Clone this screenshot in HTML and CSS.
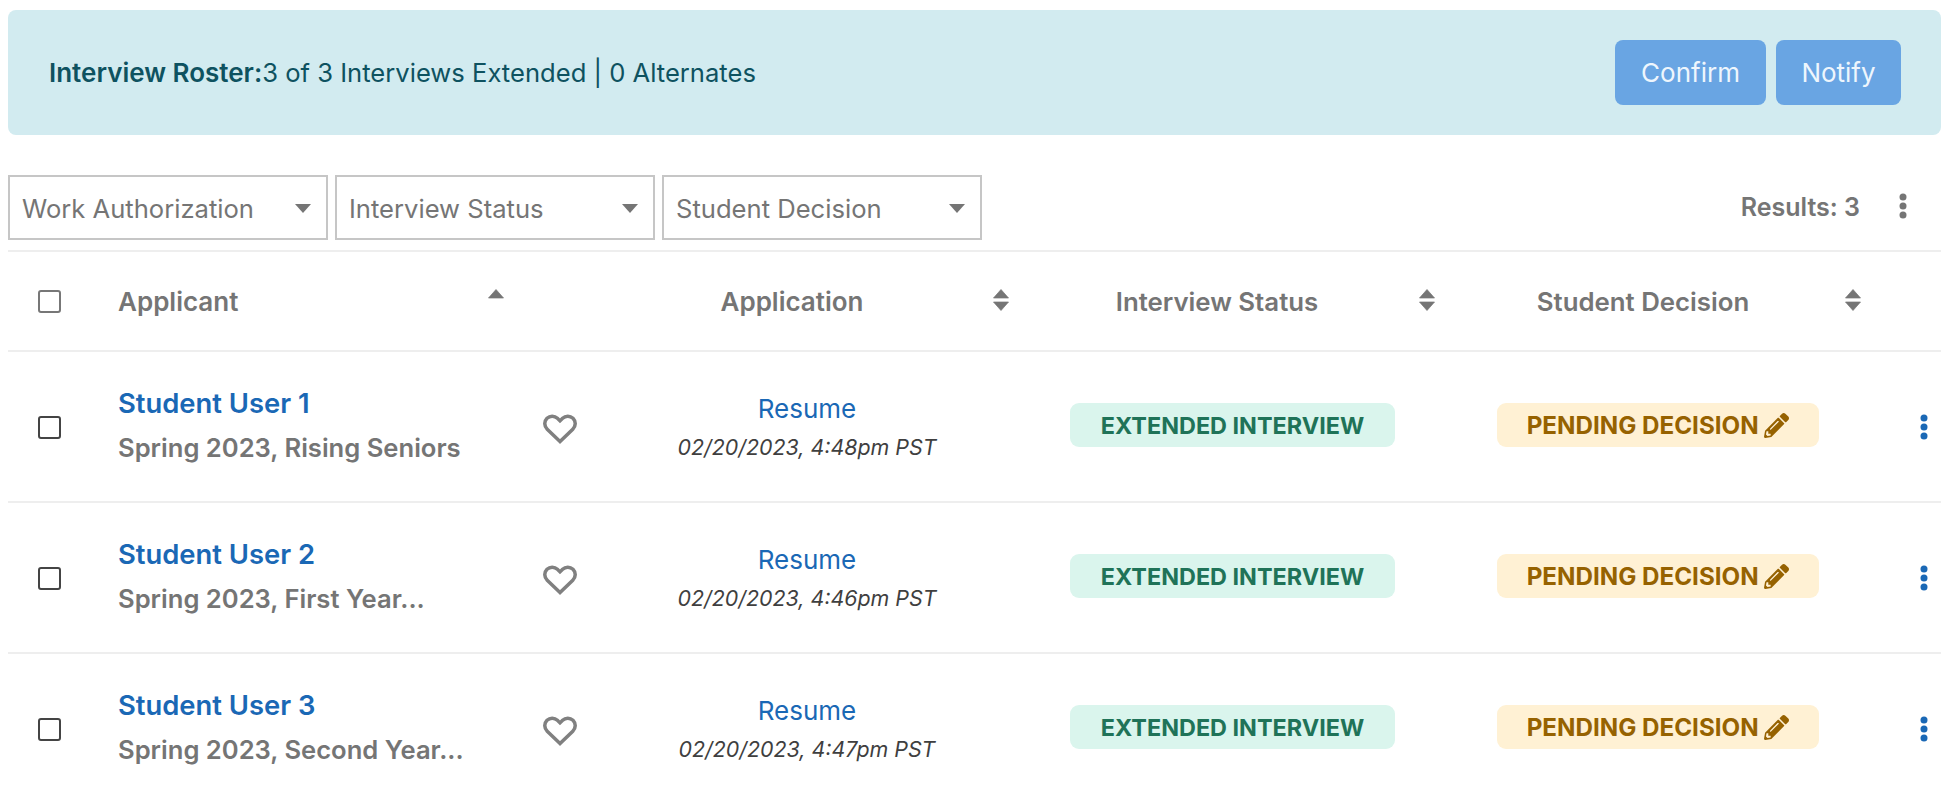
FILE: index.html
```html
<!DOCTYPE html>
<html lang="en">
<head>
<meta charset="utf-8">
<title>Interview Roster</title>
<link rel="stylesheet" href="styles.css">
</head>
<body>
<main class="page">
  <section class="banner">
    <p class="banner-text"><strong>Interview Roster:</strong>3 of 3 Interviews Extended | 0 Alternates</p>
    <div class="banner-actions">
      <button class="btn btn-confirm">Confirm</button>
      <button class="btn btn-notify">Notify</button>
    </div>
  </section>

  <section class="toolbar">
    <div class="filters">
      <div class="filter"><span>Work Authorization</span><i class="caret"></i></div>
      <div class="filter"><span>Interview Status</span><i class="caret"></i></div>
      <div class="filter"><span>Student Decision</span><i class="caret"></i></div>
    </div>
    <div class="results">
      <span>Results: 3</span>
      <svg class="kebab kebab-gray" viewBox="0 0 8 26"><circle cx="4" cy="4" r="3.5"/><circle cx="4" cy="13" r="3.5"/><circle cx="4" cy="22" r="3.5"/></svg>
    </div>
  </section>

  <section class="table">
    <div class="row head">
      <div class="cell-check"><input class="check check-head" type="checkbox" aria-label="Select all"></div>
      <div class="h-cell h-applicant"><span>Applicant</span><svg class="sort" viewBox="0 0 16 22"><path d="M8 0.5 15.5 9H0.5Z"/></svg></div>
      <div class="h-cell h-application"><span>Application</span><svg class="sort" viewBox="0 0 16 22"><path d="M8 0.5 15.5 9H0.5Z"/><path d="M8 21.5 15.5 13H0.5Z"/></svg></div>
      <div class="h-cell h-status"><span>Interview Status</span><svg class="sort" viewBox="0 0 16 22"><path d="M8 0.5 15.5 9H0.5Z"/><path d="M8 21.5 15.5 13H0.5Z"/></svg></div>
      <div class="h-cell h-decision"><span>Student Decision</span><svg class="sort" viewBox="0 0 16 22"><path d="M8 0.5 15.5 9H0.5Z"/><path d="M8 21.5 15.5 13H0.5Z"/></svg></div>
      <div></div>
    </div>

    <div class="row">
      <div class="cell-check"><input class="check" type="checkbox" aria-label="Select Student User 1"></div>
      <div class="applicant">
        <div class="who"><a class="name">Student User 1</a><div class="cohort">Spring 2023, Rising Seniors</div></div>
        <svg class="heart" viewBox="0 0 34 30"><path d="M17 27.5 4.2 15.2C1 12 1 7.2 4 4.2 7 1.4 11.5 1.5 14.4 4.3L17 6.9l2.6-2.6C22.5 1.5 27 1.4 30 4.2c3 3 3 7.8-.2 11Z"/></svg>
      </div>
      <div class="application"><a class="resume">Resume</a><div class="date">02/20/2023, 4:48pm PST</div></div>
      <div class="status"><span class="badge badge-green">EXTENDED INTERVIEW</span></div>
      <div class="decision"><span class="badge badge-yellow">PENDING DECISION <svg class="pencil" viewBox="0 0 512 512"><path d="M497.9 142.1l-46.1 46.1c-4.7 4.7-12.3 4.7-17 0l-111-111c-4.7-4.7-4.7-12.3 0-17l46.1-46.1c18.7-18.7 49.1-18.7 67.9 0l60.1 60.1c18.8 18.7 18.8 49.1 0 67.9zM284.2 99.8L21.6 362.4.4 483.9c-2.9 16.4 11.4 30.6 27.8 27.8l121.5-21.3 262.6-262.6c4.7-4.7 4.7-12.3 0-17l-111-111c-4.8-4.7-12.4-4.7-17.1 0zM124.1 339.9c-5.5-5.5-5.5-14.3 0-19.8l154-154c5.5-5.5 14.3-5.5 19.8 0s5.5 14.3 0 19.8l-154 154c-5.5 5.5-14.3 5.5-19.8 0zM88 424h48v36.3l-64.5 11.3-31.1-31.1L51.7 376H88v48z"/></svg></span></div>
      <div class="actions"><svg class="kebab kebab-blue" viewBox="0 0 8 26"><circle cx="4" cy="4" r="3.5"/><circle cx="4" cy="13" r="3.5"/><circle cx="4" cy="22" r="3.5"/></svg></div>
    </div>

    <div class="row">
      <div class="cell-check"><input class="check" type="checkbox" aria-label="Select Student User 2"></div>
      <div class="applicant">
        <div class="who"><a class="name">Student User 2</a><div class="cohort">Spring 2023, First Year...</div></div>
        <svg class="heart" viewBox="0 0 34 30"><path d="M17 27.5 4.2 15.2C1 12 1 7.2 4 4.2 7 1.4 11.5 1.5 14.4 4.3L17 6.9l2.6-2.6C22.5 1.5 27 1.4 30 4.2c3 3 3 7.8-.2 11Z"/></svg>
      </div>
      <div class="application"><a class="resume">Resume</a><div class="date">02/20/2023, 4:46pm PST</div></div>
      <div class="status"><span class="badge badge-green">EXTENDED INTERVIEW</span></div>
      <div class="decision"><span class="badge badge-yellow">PENDING DECISION <svg class="pencil" viewBox="0 0 512 512"><path d="M497.9 142.1l-46.1 46.1c-4.7 4.7-12.3 4.7-17 0l-111-111c-4.7-4.7-4.7-12.3 0-17l46.1-46.1c18.7-18.7 49.1-18.7 67.9 0l60.1 60.1c18.8 18.7 18.8 49.1 0 67.9zM284.2 99.8L21.6 362.4.4 483.9c-2.9 16.4 11.4 30.6 27.8 27.8l121.5-21.3 262.6-262.6c4.7-4.7 4.7-12.3 0-17l-111-111c-4.8-4.7-12.4-4.7-17.1 0zM124.1 339.9c-5.5-5.5-5.5-14.3 0-19.8l154-154c5.5-5.5 14.3-5.5 19.8 0s5.5 14.3 0 19.8l-154 154c-5.5 5.5-14.3 5.5-19.8 0zM88 424h48v36.3l-64.5 11.3-31.1-31.1L51.7 376H88v48z"/></svg></span></div>
      <div class="actions"><svg class="kebab kebab-blue" viewBox="0 0 8 26"><circle cx="4" cy="4" r="3.5"/><circle cx="4" cy="13" r="3.5"/><circle cx="4" cy="22" r="3.5"/></svg></div>
    </div>

    <div class="row">
      <div class="cell-check"><input class="check" type="checkbox" aria-label="Select Student User 3"></div>
      <div class="applicant">
        <div class="who"><a class="name">Student User 3</a><div class="cohort">Spring 2023, Second Year...</div></div>
        <svg class="heart" viewBox="0 0 34 30"><path d="M17 27.5 4.2 15.2C1 12 1 7.2 4 4.2 7 1.4 11.5 1.5 14.4 4.3L17 6.9l2.6-2.6C22.5 1.5 27 1.4 30 4.2c3 3 3 7.8-.2 11Z"/></svg>
      </div>
      <div class="application"><a class="resume">Resume</a><div class="date">02/20/2023, 4:47pm PST</div></div>
      <div class="status"><span class="badge badge-green">EXTENDED INTERVIEW</span></div>
      <div class="decision"><span class="badge badge-yellow">PENDING DECISION <svg class="pencil" viewBox="0 0 512 512"><path d="M497.9 142.1l-46.1 46.1c-4.7 4.7-12.3 4.7-17 0l-111-111c-4.7-4.7-4.7-12.3 0-17l46.1-46.1c18.7-18.7 49.1-18.7 67.9 0l60.1 60.1c18.8 18.7 18.8 49.1 0 67.9zM284.2 99.8L21.6 362.4.4 483.9c-2.9 16.4 11.4 30.6 27.8 27.8l121.5-21.3 262.6-262.6c4.7-4.7 4.7-12.3 0-17l-111-111c-4.8-4.7-12.4-4.7-17.1 0zM124.1 339.9c-5.5-5.5-5.5-14.3 0-19.8l154-154c5.5-5.5 14.3-5.5 19.8 0s5.5 14.3 0 19.8l-154 154c-5.5 5.5-14.3 5.5-19.8 0zM88 424h48v36.3l-64.5 11.3-31.1-31.1L51.7 376H88v48z"/></svg></span></div>
      <div class="actions"><svg class="kebab kebab-blue" viewBox="0 0 8 26"><circle cx="4" cy="4" r="3.5"/><circle cx="4" cy="13" r="3.5"/><circle cx="4" cy="22" r="3.5"/></svg></div>
    </div>
  </section>
</main>
</body>
</html>
```
FILE: styles.css
```css
* { box-sizing: border-box; }
html, body { margin: 0; height: 800px; overflow: hidden; background: #fff; }
body { font-family: Inter, "Noto Sans", sans-serif; color: #757575; }
.page { padding: 10px 9px 0 8px; }

.banner { height: 125px; background: #d2ebf0; border-radius: 8px; display: flex; align-items: center; justify-content: space-between; padding: 0 40px 0 41px; margin-bottom: 40px; }
.banner-text { margin: 0; font-size: 25.6px; color: #0e5260; }
.banner-text strong { font-weight: 600; font-size: 26px; }
.banner-actions { display: flex; gap: 10px; }
.btn { height: 65px; border: 0; border-radius: 8px; background: #69a5e3; color: #eef6fd; font: 400 26px Inter, sans-serif; }
.btn-confirm { width: 151px; }
.btn-notify { width: 125px; }

.toolbar { display: flex; justify-content: space-between; align-items: center; box-sizing: content-box; height: 65px; padding-bottom: 10px; border-bottom: 2px solid #eee; }
.filters { display: flex; gap: 7px; }
.filter { width: 320px; height: 65px; border: 2px solid #c6c6c6; display: flex; align-items: center; justify-content: space-between; padding: 2px 15px 0 12px; font-size: 25.6px; }
.caret { width: 0; height: 0; border-left: 8px solid transparent; border-right: 8px solid transparent; border-top: 9px solid #757575; }
.results { display: flex; align-items: center; gap: 39px; padding-right: 34px; font-size: 25px; font-weight: 600; margin-top: -4px; }
.results span { margin-top: 2px; }
.kebab { width: 8px; height: 26px; display: block; }
.kebab-gray { fill: #757575; }
.kebab-blue { fill: #1a68b5; }

.row { display: grid; grid-template-columns: 92px 498px 418px 433px 418px 74px; align-items: center; height: 151px; border-bottom: 2px solid #eee; }
.row.head { height: 100px; }
.cell-check { display: flex; padding-left: 30px; margin-top: 1px; }
.check { appearance: none; width: 23px; height: 23px; margin: 0; border: 2px solid #444; border-radius: 3px; background: #fff; }
.check-head { border-color: #777; }

.h-cell { display: grid; align-items: center; font-size: 26px; font-weight: 600; }
.h-cell span { text-align: center; }
.sort { width: 16px; height: 22px; fill: #757575; stroke: #757575; stroke-width: 0.7; stroke-linejoin: round; margin-top: -2px; }
.h-applicant { grid-template-columns: 370px 1fr; padding-left: 18px; }
.h-applicant span { text-align: left; }
.h-application { grid-template-columns: 388px 1fr; }
.h-application .sort { margin-left: 7px; }
.h-status { grid-template-columns: 402px 1fr; font-size: 25.8px; }
.h-status .sort { margin-left: 1px; }
.h-decision { grid-template-columns: 388px 1fr; font-size: 25.8px; }
.h-decision .sort { margin-left: 8px; }

.applicant { display: flex; align-items: center; justify-content: space-between; padding: 0 21px 0 18px; }
.name { display: block; font-size: 27.4px; font-weight: 600; color: #1a68b5; line-height: 32px; margin-bottom: 13px; margin-top: -2px; }
.cohort { font-size: 25.6px; font-weight: 600; line-height: 32px; }
.heart { width: 34px; height: 30px; margin-top: 5px; fill: none; stroke: #808080; stroke-width: 3.5; }

.application { text-align: center; }
.resume { display: block; font-size: 26px; color: #1a68b5; line-height: 30px; margin-top: 1px; margin-bottom: 9px; }
.date { font-size: 21.4px; font-style: italic; color: #3f3f3f; line-height: 28px; }

.status, .decision { display: flex; justify-content: center; margin-top: -3px; }
.badge { height: 44px; border-radius: 9px; display: flex; align-items: center; justify-content: center; font-weight: 700; white-space: pre; }
.badge-green { width: 325px; background: #daf5ed; color: #1f7358; font-size: 23.4px; }
.badge-yellow { width: 322px; background: #fff1d4; color: #966200; font-size: 24.2px; }
.pencil { width: 25px; height: 25px; fill: #966200; }

.actions { display: flex; justify-content: flex-end; padding-right: 13px; }
```
